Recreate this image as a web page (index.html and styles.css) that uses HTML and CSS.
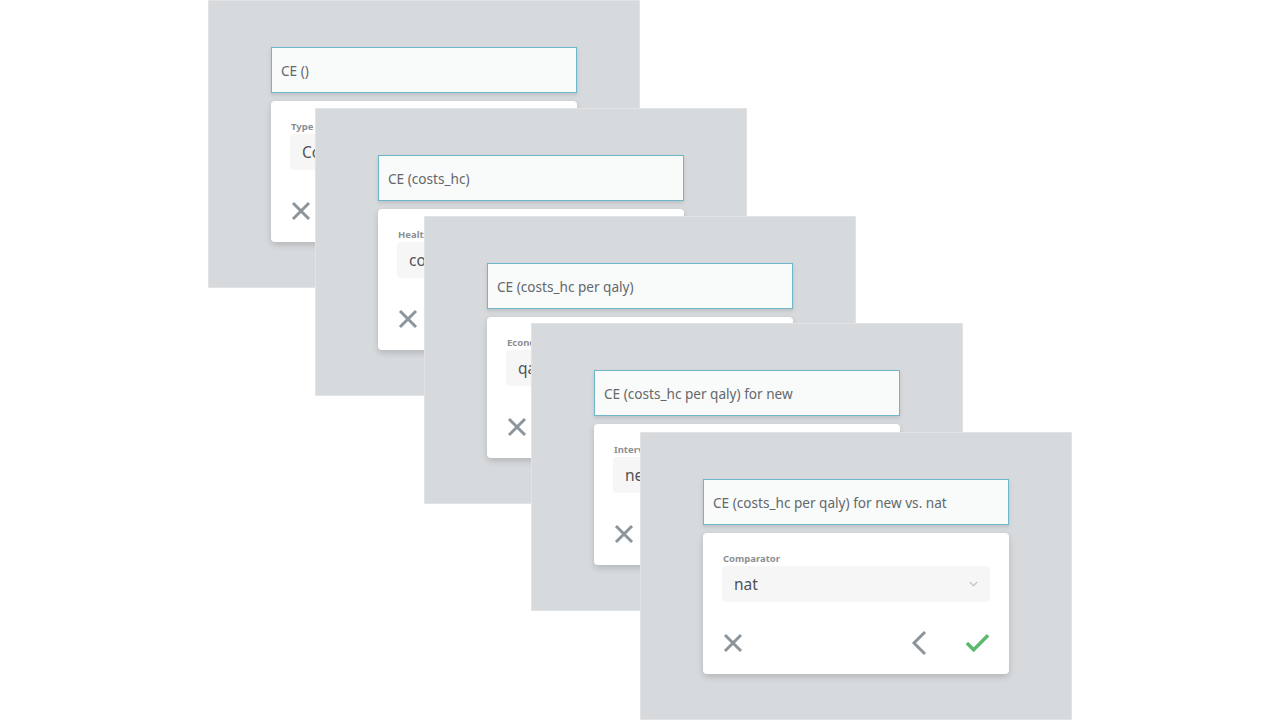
FILE: index.html
```html
<!DOCTYPE html>
<html lang="en">
<head>
<meta charset="utf-8">
<title>Indicator builder steps</title>
<link rel="stylesheet" href="styles.css">
</head>
<body>
<div class="canvas">
  <section class="panel p1">
    <div class="title-input">CE ()</div>
    <div class="card">
      <div class="field-label">Type</div>
      <div class="select"><span class="select-value">Cost-effectiveness</span><svg class="chev-down" viewBox="0 0 10 6"><path d="M1 1l4 4 4-4"/></svg></div>
      <div class="actions">
        <svg class="ic-x" viewBox="0 0 20 20"><path d="M2 2l16 16M18 2L2 18"/></svg>
        <div class="right-actions">
          <svg class="ic-back" viewBox="0 0 16 26"><path d="M14 2L3 13l11 11"/></svg>
          <svg class="ic-ok" viewBox="0 0 26 20"><path d="M2 10l7 7L24 2"/></svg>
        </div>
      </div>
    </div>
  </section>
  <section class="panel p2">
    <div class="title-input">CE (costs_hc)</div>
    <div class="card">
      <div class="field-label">Health costs</div>
      <div class="select"><span class="select-value">costs_hc</span><svg class="chev-down" viewBox="0 0 10 6"><path d="M1 1l4 4 4-4"/></svg></div>
      <div class="actions">
        <svg class="ic-x" viewBox="0 0 20 20"><path d="M2 2l16 16M18 2L2 18"/></svg>
        <div class="right-actions">
          <svg class="ic-back" viewBox="0 0 16 26"><path d="M14 2L3 13l11 11"/></svg>
          <svg class="ic-ok" viewBox="0 0 26 20"><path d="M2 10l7 7L24 2"/></svg>
        </div>
      </div>
    </div>
  </section>
  <section class="panel p3">
    <div class="title-input">CE (costs_hc per qaly)</div>
    <div class="card">
      <div class="field-label">Economic outcome</div>
      <div class="select"><span class="select-value">qaly</span><svg class="chev-down" viewBox="0 0 10 6"><path d="M1 1l4 4 4-4"/></svg></div>
      <div class="actions">
        <svg class="ic-x" viewBox="0 0 20 20"><path d="M2 2l16 16M18 2L2 18"/></svg>
        <div class="right-actions">
          <svg class="ic-back" viewBox="0 0 16 26"><path d="M14 2L3 13l11 11"/></svg>
          <svg class="ic-ok" viewBox="0 0 26 20"><path d="M2 10l7 7L24 2"/></svg>
        </div>
      </div>
    </div>
  </section>
  <section class="panel p4">
    <div class="title-input">CE (costs_hc per qaly) for new</div>
    <div class="card">
      <div class="field-label">Intervention</div>
      <div class="select"><span class="select-value">new</span><svg class="chev-down" viewBox="0 0 10 6"><path d="M1 1l4 4 4-4"/></svg></div>
      <div class="actions">
        <svg class="ic-x" viewBox="0 0 20 20"><path d="M2 2l16 16M18 2L2 18"/></svg>
        <div class="right-actions">
          <svg class="ic-back" viewBox="0 0 16 26"><path d="M14 2L3 13l11 11"/></svg>
          <svg class="ic-ok" viewBox="0 0 26 20"><path d="M2 10l7 7L24 2"/></svg>
        </div>
      </div>
    </div>
  </section>
  <section class="panel p5">
    <div class="title-input">CE (costs_hc per qaly) for new vs. nat</div>
    <div class="card">
      <div class="field-label">Comparator</div>
      <div class="select"><span class="select-value">nat</span><svg class="chev-down" viewBox="0 0 10 6"><path d="M1 1l4 4 4-4"/></svg></div>
      <div class="actions">
        <svg class="ic-x" viewBox="0 0 20 20"><path d="M2 2l16 16M18 2L2 18"/></svg>
        <div class="right-actions">
          <svg class="ic-back" viewBox="0 0 16 26"><path d="M14 2L3 13l11 11"/></svg>
          <svg class="ic-ok" viewBox="0 0 26 20"><path d="M2 10l7 7L24 2"/></svg>
        </div>
      </div>
    </div>
  </section>
</div>
</body>
</html>
```

FILE: styles.css
```css
* { box-sizing: border-box; }
html, body {
  margin: 0;
  padding: 0;
  background: #ffffff;
  font-family: "Noto Sans", "Open Sans", sans-serif;
}
.canvas {
  position: relative;
  width: 1280px;
  height: 721px;
  overflow: hidden;
}
.panel {
  position: absolute;
  width: 432px;
  height: 288px;
  background: #d7dadd;
  border: 1px solid #e1e3e5;
  padding: 46px 62px 0;
  display: flex;
  flex-direction: column;
  gap: 8px;
}
.p1 { left: 208px; top: 0; }
.p2 { left: 315px; top: 108px; }
.p3 { left: 424px; top: 216px; }
.p4 { left: 531px; top: 323px; }
.p5 { left: 640px; top: 432px; }

.title-input {
  flex: 0 0 46px;
  height: 46px;
  background: #f9fafa;
  border: 1px solid #6fb6c8;
  box-shadow: 0 2px 4px rgba(0,0,0,0.12);
  padding: 1px 9px 0;
  display: flex;
  align-items: center;
  font-size: 13.6px;
  color: #63686c;
  white-space: nowrap;
}
.card {
  flex: 0 0 auto;
  background: #ffffff;
  border-radius: 4px;
  box-shadow: 0 3px 6px rgba(0,0,0,0.16);
  padding: 19px 19px 18px 20px;
  display: flex;
  flex-direction: column;
}
.field-label {
  font-size: 9.5px;
  font-weight: 700;
  color: #8c8f92;
  line-height: 14px;
  white-space: nowrap;
}
.select {
  height: 36px;
  flex: 0 0 36px;
  background: #f6f6f6;
  border-radius: 4px;
  margin-left: -1px;
  padding: 0 11px 0 12px;
  display: flex;
  align-items: center;
  justify-content: space-between;
}
.select-value {
  font-size: 15.5px;
  color: #505356;
  white-space: nowrap;
}
.chev-down {
  width: 9px;
  height: 6px;
  fill: none;
  stroke: #b5b8bb;
  stroke-width: 1.2;
  margin-right: 1px;
}
.actions {
  margin-top: 28px;
  height: 26px;
  flex: 0 0 26px;
  display: flex;
  align-items: center;
  justify-content: space-between;
}
.right-actions {
  display: flex;
  align-items: center;
  gap: 38px;
}
.ic-x {
  width: 20px;
  height: 20px;
  fill: none;
  stroke: #8c959c;
  stroke-width: 3;
}
.ic-back {
  width: 16px;
  height: 26px;
  fill: none;
  stroke: #8c959c;
  stroke-width: 3;
}
.ic-ok {
  width: 25px;
  height: 20px;
  fill: none;
  stroke: #5cb86a;
  stroke-width: 3.6;
}
```
